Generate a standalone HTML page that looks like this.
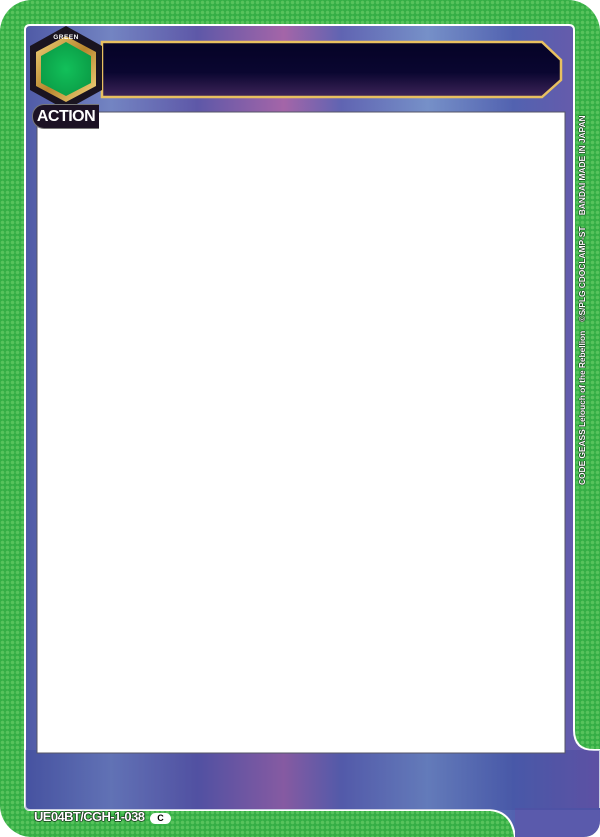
<!DOCTYPE html>
<html><head><meta charset="utf-8"><style>
html,body{margin:0;padding:0;width:600px;height:837px;overflow:hidden;background:#fff}
.card{position:absolute;left:0;top:0;width:600px;height:837px;border-radius:32px 32px 16px 32px;background-color:#35ae45;
background-image:radial-gradient(circle,#58c25c 1.6px,transparent 2px);background-size:5px 5px;overflow:hidden}
svg{position:absolute;left:0;top:0}
.side{position:absolute;left:577px;top:485px;transform-origin:0 0;transform:rotate(-90deg);white-space:nowrap;font:bold 8.5px "Liberation Sans",sans-serif;color:#fff;text-shadow:0 0 1px #000,0 0 1px #000,0 0 1px #000;width:380px;letter-spacing:-0.1px}
.code{position:absolute;left:34px;top:809px;font:bold 13px "Liberation Sans",sans-serif;color:#fff;text-shadow:0 0 1px #000,0 0 1px #000,0 0 1px #000,0 0 1px #000,0 0 1px #000;letter-spacing:-0.6px}
.rar{position:absolute;left:150px;top:813px;width:21px;height:11px;background:#fff;border-radius:6px;font:bold 9px "Liberation Sans",sans-serif;text-align:center;line-height:11px;color:#000}
.action{position:absolute;left:32px;top:104px;width:66px;height:23px;background:#1c1224;border-radius:12px 0 0 12px;border:1px solid #777;border-right:none;font:bold 16px "Liberation Sans",sans-serif;color:#fff;line-height:23px;text-align:center;letter-spacing:-0.5px}
.green{position:absolute;left:46px;top:34px;width:40px;text-align:center;font:bold 6.5px "Liberation Sans",sans-serif;color:#fff;letter-spacing:.5px}
</style></head><body>
<div class="card">
<svg width="600" height="837" viewBox="0 0 600 837">
<defs>
<linearGradient id="bg" x1="0" y1="0" x2="1" y2="0">
<stop offset="0" stop-color="#4f5aa6"/><stop offset=".15" stop-color="#7384c2"/><stop offset=".3" stop-color="#5e58a8"/>
<stop offset=".45" stop-color="#a465a8"/><stop offset=".55" stop-color="#6064b2"/><stop offset=".7" stop-color="#7690c8"/>
<stop offset=".85" stop-color="#5262b0"/><stop offset="1" stop-color="#6e58aa"/></linearGradient>
<linearGradient id="bar" x1="0" y1="0" x2="0" y2="1"><stop offset="0" stop-color="#050326"/><stop offset=".55" stop-color="#0a0630"/><stop offset="1" stop-color="#3e2458"/></linearGradient>
<linearGradient id="gold" x1="0" y1="0" x2="1" y2="1"><stop offset="0" stop-color="#f0d27a"/><stop offset=".5" stop-color="#b8862e"/><stop offset="1" stop-color="#f5da80"/></linearGradient>
<radialGradient id="gr" cx=".5" cy=".5" r=".6"><stop offset="0" stop-color="#12c05a"/><stop offset="1" stop-color="#0a9a45"/></radialGradient>
</defs>
<path d="M30,25 H569 Q574,25 574,30 V730 Q574,750 594,750 H600 V837 H515 Q512,812 490,810 H30 Q25,810 25,805 V30 Q25,25 30,25 Z" fill="url(#bg)" stroke="#fff" stroke-width="2"/>
<rect x="515" y="808" width="85" height="29" fill="#5a5aac"/>
<rect x="25" y="750" width="575" height="60" fill="#2a3a90" opacity=".25"/>
<rect x="37" y="112" width="528" height="641" fill="#fff" stroke="#556" stroke-width="1"/>
<path d="M102,42 H542 L561,60 V80 L542,97 H102 Z" fill="url(#bar)" stroke="#e8c060" stroke-width="2.5"/>
<path d="M66,26 L102,46 V90 L66,110 L30,90 V46 Z" fill="#1a1420"/>
<path d="M66,36 L96,52 V86 L66,102 L36,86 V52 Z" fill="url(#gold)"/>
<path d="M66,42 L91,56 V83 L66,96 L41,83 V56 Z" fill="url(#gr)"/>
</svg>
<div class="green">GREEN</div>
<div class="action">ACTION</div>
<div class="side">CODE GEASS Lelouch of the Rebellion &nbsp;&nbsp; ©S/PLG CDOCLAMP-ST &nbsp;&nbsp;&nbsp; BANDAI MADE IN JAPAN</div>
<div class="code">UE04BT/CGH-1-038</div>
<div class="rar">C</div>
</div>
</body></html>
